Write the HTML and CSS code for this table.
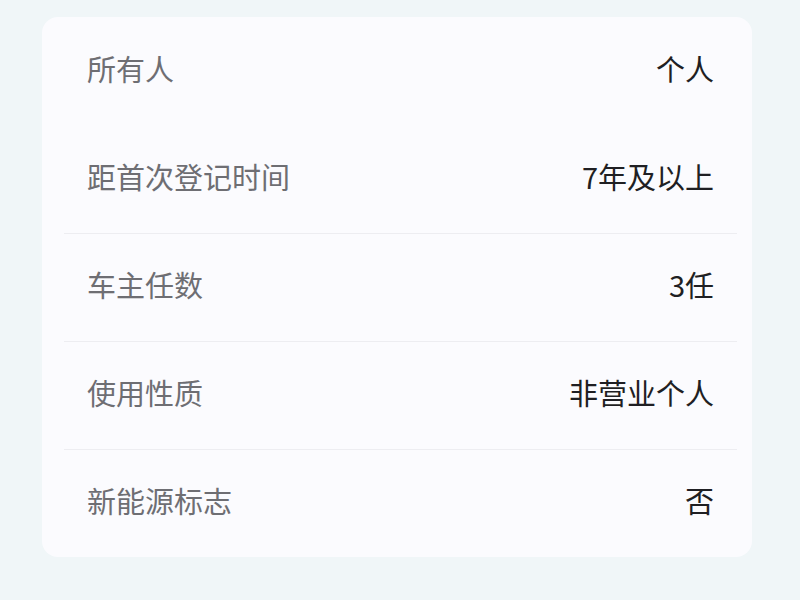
FILE: index.html
```html
<!DOCTYPE html>
<html lang="zh">
<head>
    <meta charset="UTF-8">
    <meta name="viewport" content="width=device-width, initial-scale=1.0">
    <title>车辆信息</title>
    <link rel="stylesheet" href="styles.css">
</head>
<body>
<div class="card">
    <div class="row">
        <span class="label">所有人</span>
        <span class="value">个人</span>
    </div>
    <div class="row">
        <span class="label">距首次登记时间</span>
        <span class="value">7年及以上</span>
    </div>
    <div class="row">
        <span class="label">车主任数</span>
        <span class="value">3任</span>
    </div>
    <div class="row">
        <span class="label">使用性质</span>
        <span class="value">非营业个人</span>
    </div>
    <div class="row">
        <span class="label">新能源标志</span>
        <span class="value">否</span>
    </div>
</div>
</body>
</html>
```

FILE: styles.css
```css
body {
    font-family: "Noto Sans CJK SC", "Noto Sans", sans-serif;
    background-color: #f0f6f8;
    margin: 0;
    padding: 17px 48px 0 42px;
}

.card {
    background: #fbfbfe;
    border-radius: 16px;
    padding: 0 15px 0 22px;
}

.row {
    display: flex;
    justify-content: space-between;
    align-items: center;
    height: 108px;
    padding: 0 23px 7px 23px;
    border-top: 1px solid #ededf1;
    box-sizing: border-box;
}

.row:nth-child(-n+2) {
    border-top: none;
}

.label {
    font-size: 29px;
    color: #6e6e73;
}

.value {
    font-size: 29px;
    color: #1f1f23;
}
```
